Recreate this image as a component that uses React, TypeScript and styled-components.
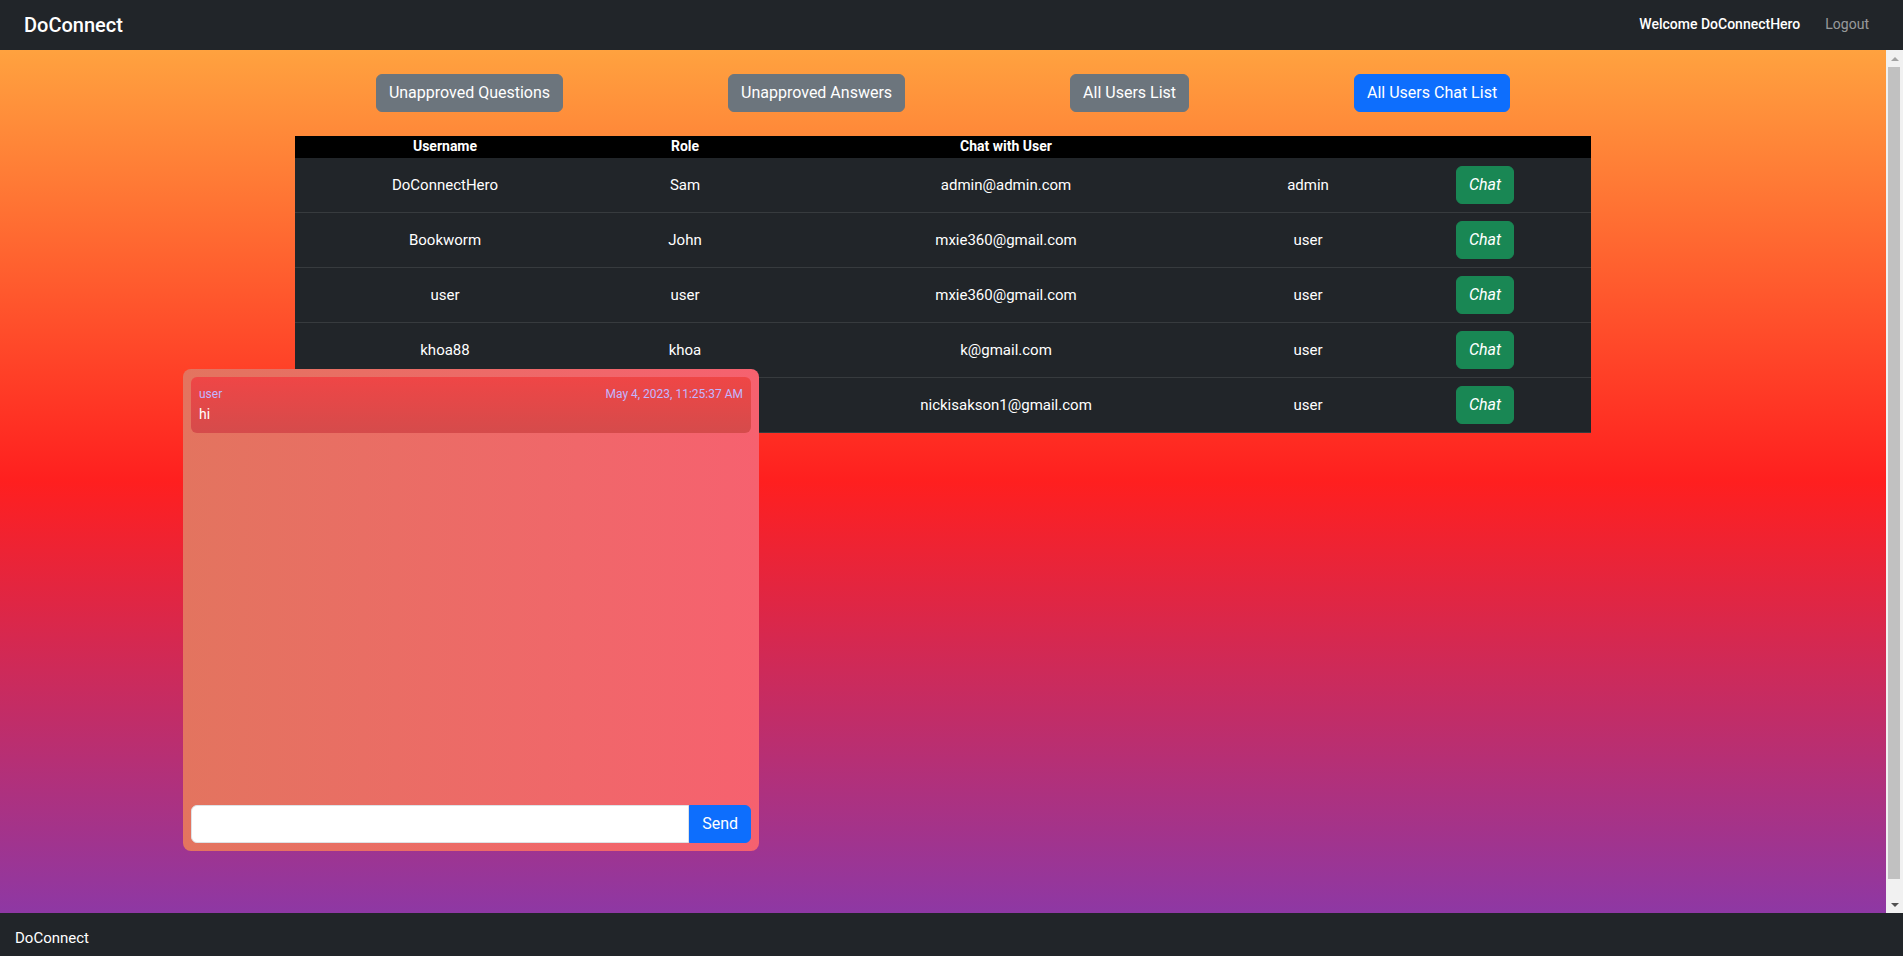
import React from "react";
import styled, { createGlobalStyle } from "styled-components";

const GlobalStyle = createGlobalStyle`
  html, body { margin: 0; padding: 0; height: 100%; overflow: hidden; }
  body {
    font-family: Roboto, "Noto Sans", "Liberation Sans", sans-serif;
    color: #fff;
    line-height: 1.5;
  }
  *, *::before, *::after { box-sizing: border-box; }
`;

const Page = styled.div`
  display: flex;
  flex-direction: column;
  height: 100vh;
`;

const NavBar = styled.nav`
  flex: 0 0 50px;
  display: flex;
  align-items: center;
  justify-content: space-between;
  padding: 0 34px 0 24px;
  background: #212529;
`;

const Brand = styled.a`
  font-size: 20px;
  font-weight: 500;
  color: #fff;
  text-decoration: none;
  line-height: 30px;
`;

const NavRight = styled.div`
  display: flex;
  align-items: center;
  gap: 25px;
  font-size: 14px;
  line-height: 21px;
  margin-top: -2px;
`;

const Welcome = styled.span`
  color: #fff;
  font-weight: 500;
`;

const NavLink = styled.a`
  color: rgba(255, 255, 255, 0.55);
  text-decoration: none;
`;

const MainRow = styled.div`
  flex: 1 1 auto;
  min-height: 0;
  display: flex;
`;

const Main = styled.main`
  flex: 1 1 auto;
  min-width: 0;
  overflow: hidden;
  background: linear-gradient(180deg, #ffa23f 0%, #ff1f1f 50%, #8e38a4 100%);
`;

const ScrollBar = styled.div`
  flex: 0 0 17px;
  display: flex;
  flex-direction: column;
  background: #f1f1f1;
`;

const ScrollArrow = styled.div<{ $down?: boolean }>`
  flex: 0 0 17px;
  display: flex;
  align-items: center;
  justify-content: center;

  &::before {
    content: "";
    width: 0;
    height: 0;
    border-left: 4px solid transparent;
    border-right: 4px solid transparent;
    ${(p) =>
      p.$down
        ? "border-top: 4px solid #505050;"
        : "border-bottom: 4px solid #a3a3a3;"}
  }
`;

const ScrollTrack = styled.div`
  flex: 1 1 auto;
  display: flex;
  flex-direction: column;
  padding: 0 3px 17px 2px;
`;

const ScrollThumb = styled.div`
  flex: 1 1 auto;
  background: #c1c1c1;
`;

const Content = styled.div`
  position: relative;
  min-height: 881px;
  padding-top: 24px;
`;

const ActionRow = styled.div`
  display: flex;
  justify-content: center;
  gap: 165px;
`;

const ActionButton = styled.button<{ $primary?: boolean }>`
  font-family: inherit;
  font-size: 16px;
  line-height: 1.5;
  padding: 6px 12px;
  border-radius: 6px;
  color: #fff;
  cursor: pointer;
  background: ${(p) => (p.$primary ? "#0d6efd" : "#6c757d")};
  border: 1px solid ${(p) => (p.$primary ? "#0d6efd" : "#6c757d")};
`;

const TableWrap = styled.div`
  max-width: 1320px;
  margin: 24px auto 0;
  padding: 0 12px;
`;

const Table = styled.table`
  width: 100%;
  border-collapse: collapse;
  table-layout: fixed;
`;

const Col = styled.col<{ $w: number }>`
  width: ${(p) => p.$w}px;
`;

const HeadCell = styled.th`
  background: #000;
  color: #fff;
  font-size: 14px;
  font-weight: 700;
  line-height: 21px;
  padding: 0;
  text-align: center;
  border-bottom: 1px solid #000;
`;

const Cell = styled.td`
  background: #212529;
  color: #fff;
  font-size: 15px;
  line-height: 1.5;
  padding: 8px;
  text-align: center;
  vertical-align: middle;
  border-bottom: 1px solid #373b3e;
`;

const ChatButton = styled.button`
  font-family: inherit;
  font-size: 16px;
  font-style: italic;
  line-height: 1.5;
  padding: 6px 12px;
  border-radius: 6px;
  color: #fff;
  background: #198754;
  border: 1px solid #198754;
  cursor: pointer;
`;

const ChatPanel = styled.section`
  position: absolute;
  left: 183px;
  top: 319px;
  width: 576px;
  height: 482px;
  padding: 8px;
  border-radius: 8px;
  background: linear-gradient(90deg, #e3745f 0%, #f6616f 100%);
  display: flex;
  flex-direction: column;
`;

const MessageList = styled.div`
  flex: 1 1 auto;
  display: flex;
  flex-direction: column;
  gap: 8px;
`;

const Bubble = styled.div`
  padding: 8px;
  border-radius: 6px;
  background: linear-gradient(180deg, #ef4646 0%, #d54b4b 100%);
`;

const BubbleMeta = styled.div`
  display: flex;
  justify-content: space-between;
  font-size: 12px;
  line-height: 18px;
  color: #c2b6ff;
`;

const BubbleText = styled.div`
  font-size: 14px;
  line-height: 22px;
  color: #fff;
`;

const InputRow = styled.form`
  display: flex;
  height: 38px;
`;

const MessageInput = styled.input`
  flex: 1 1 auto;
  min-width: 0;
  border: 1px solid #dee2e6;
  border-radius: 6px 0 0 6px;
  background: #fff;
  padding: 6px 12px;
  font-family: inherit;
  font-size: 16px;
  outline: none;
`;

const SendButton = styled.button`
  font-family: inherit;
  font-size: 16px;
  line-height: 1.5;
  padding: 6px 12px;
  border-radius: 0 6px 6px 0;
  color: #fff;
  background: #0d6efd;
  border: 1px solid #0d6efd;
  cursor: pointer;
`;

const Footer = styled.footer`
  flex: 0 0 43px;
  background: #212529;
  padding: 14px 15px 0;
  font-size: 15px;
  line-height: 1.5;
  color: #fff;
`;

const users = [
  { username: "DoConnectHero", name: "Sam", email: "admin@admin.com", role: "admin" },
  { username: "Bookworm", name: "John", email: "mxie360@gmail.com", role: "user" },
  { username: "user", name: "user", email: "mxie360@gmail.com", role: "user" },
  { username: "khoa88", name: "khoa", email: "k@gmail.com", role: "user" },
  { username: "", name: "", email: "nickisakson1@gmail.com", role: "user" },
];

export default function App() {
  return (
    <Page>
      <GlobalStyle />
      <NavBar>
        <Brand href="#">DoConnect</Brand>
        <NavRight>
          <Welcome>Welcome DoConnectHero</Welcome>
          <NavLink href="#">Logout</NavLink>
        </NavRight>
      </NavBar>
      <MainRow>
        <Main>
          <Content>
            <ActionRow>
              <ActionButton>Unapproved Questions</ActionButton>
              <ActionButton>Unapproved Answers</ActionButton>
              <ActionButton>All Users List</ActionButton>
              <ActionButton $primary>All Users Chat List</ActionButton>
            </ActionRow>
            <TableWrap>
              <Table>
                <colgroup>
                  <Col $w={300} />
                  <Col $w={180} />
                  <Col $w={462} />
                  <Col $w={142} />
                  <Col $w={212} />
                </colgroup>
                <thead>
                  <tr>
                    <HeadCell>Username</HeadCell>
                    <HeadCell>Role</HeadCell>
                    <HeadCell>Chat with User</HeadCell>
                    <HeadCell />
                    <HeadCell />
                  </tr>
                </thead>
                <tbody>
                  {users.map((u, i) => (
                    <tr key={i}>
                      <Cell>{u.username}</Cell>
                      <Cell>{u.name}</Cell>
                      <Cell>{u.email}</Cell>
                      <Cell>{u.role}</Cell>
                      <Cell>
                        <ChatButton>Chat</ChatButton>
                      </Cell>
                    </tr>
                  ))}
                </tbody>
              </Table>
            </TableWrap>
            <ChatPanel>
              <MessageList>
                <Bubble>
                  <BubbleMeta>
                    <span>user</span>
                    <span>May 4, 2023, 11:25:37 AM</span>
                  </BubbleMeta>
                  <BubbleText>hi</BubbleText>
                </Bubble>
              </MessageList>
              <InputRow onSubmit={(e) => e.preventDefault()}>
                <MessageInput type="text" />
                <SendButton type="submit">Send</SendButton>
              </InputRow>
            </ChatPanel>
          </Content>
        </Main>
        <ScrollBar aria-hidden="true">
          <ScrollArrow />
          <ScrollTrack>
            <ScrollThumb />
          </ScrollTrack>
          <ScrollArrow $down />
        </ScrollBar>
      </MainRow>
      <Footer>DoConnect</Footer>
    </Page>
  );
}
